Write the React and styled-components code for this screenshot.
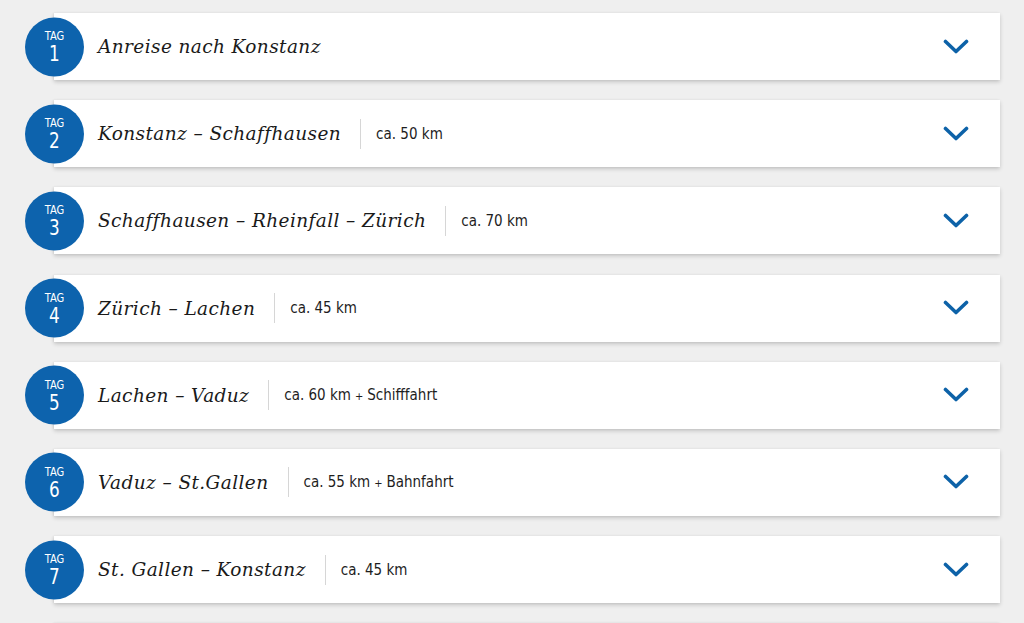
import React from 'react';
import styled, { createGlobalStyle } from 'styled-components';

const days = [
  { day: 1, title: 'Anreise nach Konstanz' },
  { day: 2, title: 'Konstanz – Schaffhausen', distance: 'ca. 50 km' },
  { day: 3, title: 'Schaffhausen – Rheinfall – Zürich', distance: 'ca. 70 km' },
  { day: 4, title: 'Zürich – Lachen', distance: 'ca. 45 km' },
  { day: 5, title: 'Lachen – Vaduz', distance: 'ca. 60 km', extra: 'Schifffahrt' },
  { day: 6, title: 'Vaduz – St.Gallen', distance: 'ca. 55 km', extra: 'Bahnfahrt' },
  { day: 7, title: 'St. Gallen – Konstanz', distance: 'ca. 45 km' },
  { day: 8, title: 'Abreise' },
];

const GlobalStyle = createGlobalStyle`
  html, body {
    margin: 0;
    padding: 0;
    background: #efefef;
    overflow: hidden;
  }
`;

const Chevron = () => (
  <svg width="26" height="16" viewBox="0 0 26 16">
    <polyline
      points="2.5,2.5 13,12.5 23.5,2.5"
      fill="none"
      stroke="#0d62a8"
      strokeWidth="3.6"
      strokeLinecap="round"
      strokeLinejoin="round"
    />
  </svg>
);

const App = () => {
  return (
    <Page>
      <GlobalStyle />
      <List>
        {days.map(item => (
          <Row key={item.day}>
            <DayBadge>
              <BadgeLabel>TAG</BadgeLabel>
              <BadgeNumber>{item.day}</BadgeNumber>
            </DayBadge>
            <Card>
              <Title>{item.title}</Title>
              {item.distance && (
                <Distance>
                  {item.distance}
                  {item.extra && (
                    <>
                      <Plus>+</Plus>
                      {item.extra}
                    </>
                  )}
                </Distance>
              )}
              <Toggle>
                <Chevron />
              </Toggle>
            </Card>
          </Row>
        ))}
      </List>
    </Page>
  );
};

const Page = styled.div`
  width: 1024px;
  height: 623px;
  overflow: hidden;
  padding: 13px 24px 0 25px;
  box-sizing: border-box;
`;

const List = styled.div`
  display: flex;
  flex-direction: column;
  gap: 20.2px;
`;

const Row = styled.div`
  display: flex;
  align-items: center;
  position: relative;
  height: 67px;
`;

const DayBadge = styled.div`
  position: absolute;
  left: 0;
  top: 50%;
  transform: translateY(-50%);
  z-index: 1;
  width: 59px;
  height: 59px;
  border-radius: 50%;
  background: #0d63ad;
  color: #fff;
  display: flex;
  flex-direction: column;
  align-items: center;
  justify-content: center;
  font-family: 'DejaVu Sans', 'Liberation Sans', sans-serif;
  font-stretch: condensed;
  line-height: 1;
`;

const BadgeLabel = styled.span`
  font-size: 13px;
  transform: scaleX(0.85);
`;

const BadgeNumber = styled.span`
  font-size: 22px;
  margin-top: 1px;
  transform: scaleX(0.85);
`;

const Card = styled.div`
  flex: 1;
  height: 100%;
  margin-left: 29px;
  background: #fff;
  box-shadow: 0 2px 4px rgba(0, 0, 0, 0.18), -1px 0 2px rgba(0, 0, 0, 0.06);
  display: flex;
  align-items: center;
  padding-left: 44px;
  padding-right: 31px;
  box-sizing: border-box;
`;

const Title = styled.h2`
  margin: 0;
  font-family: 'DejaVu Serif', 'Liberation Serif', serif;
  font-style: italic;
  font-weight: normal;
  font-size: 18.5px;
  letter-spacing: 0.4px;
  color: #1a1a1a;
`;

const Distance = styled.span`
  margin-left: 19px;
  padding: 6px 0 6px 15px;
  border-left: 1px solid #d6d6d6;
  font-family: 'DejaVu Sans', 'Liberation Sans', sans-serif;
  font-stretch: condensed;
  font-size: 15px;
  color: #1e1e1e;
`;

const Plus = styled.span`
  font-size: 11px;
  margin: 0 4px;
`;

const Toggle = styled.div`
  margin-left: auto;
  display: flex;
`;

export default App;
